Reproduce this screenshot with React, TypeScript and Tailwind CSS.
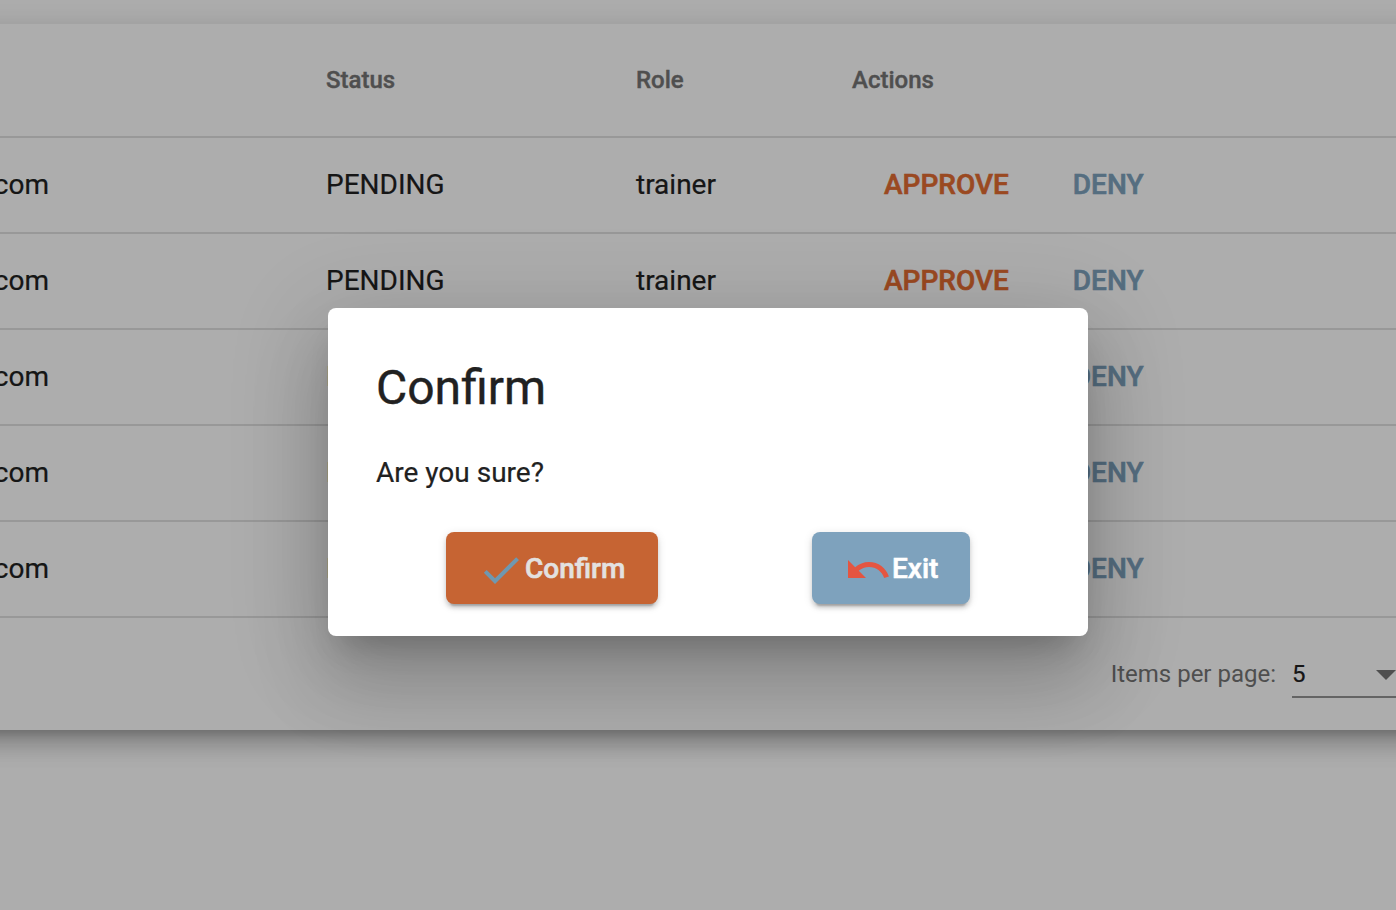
import React from "react";

const rows = [1, 2, 3, 4, 5];

function CheckIcon() {
  return (
    <svg viewBox="0 0 24 24" className="mt-1 size-12 shrink-0 fill-[#6f98b0]">
      <path d="M9 16.17L4.83 12l-1.42 1.41L9 19 21 7l-1.41-1.41z" />
    </svg>
  );
}

function UndoIcon() {
  return (
    <svg viewBox="0 0 24 24" className="mt-1 size-12 shrink-0 fill-[#e45541]">
      <path d="M12.5 8c-2.65 0-5.05.99-6.9 2.6L2 7v9h9l-3.62-3.62c1.39-1.16 3.16-1.88 5.12-1.88 3.54 0 6.55 2.31 7.6 5.5l2.37-.78C21.08 11.03 17.15 8 12.5 8z" />
    </svg>
  );
}

function UsersTable() {
  return (
    <div className="-mx-16 h-[706px] bg-white px-16 shadow-[0_10px_10px_-6px_rgba(0,0,0,0.2),0_16px_20px_2px_rgba(0,0,0,0.14),0_6px_28px_4px_rgba(0,0,0,0.12)]">
      <div className="flex h-[114px] items-center border-b-2 border-black/12 text-[24px] font-medium text-[#757575] [-webkit-text-stroke:0.4px]">
        <div className="w-[326px] shrink-0" />
        <div className="w-[310px] shrink-0">Status</div>
        <div className="w-[216px] shrink-0">Role</div>
        <div>Actions</div>
      </div>
      {rows.map((id) => (
        <div
          key={id}
          className="flex h-24 items-center border-b-2 border-black/12 text-[28px] text-[#212121] [-webkit-text-stroke:0.2px]"
        >
          <div className="w-[326px] shrink-0">
            <div className="flex w-[49px] justify-end">com</div>
          </div>
          <div className="w-[310px] shrink-0">PENDING</div>
          <div className="w-[216px] shrink-0">trainer</div>
          <div className="flex gap-16 pl-8 font-medium [-webkit-text-stroke:0.6px]">
            <span className="text-[#e46c32]">APPROVE</span>
            <span className="text-[#7ea2bd]">DENY</span>
          </div>
        </div>
      ))}
      <div className="flex h-28 items-center justify-end gap-4 text-[24px] text-[#757575]">
        <span>Items per page:</span>
        <div className="-mr-2 flex h-[46px] w-[112px] shrink-0 translate-y-px items-center justify-between border-b-2 border-black/42 pr-2">
          <span className="text-[#212121] [-webkit-text-stroke:0.2px]">5</span>
          <svg viewBox="0 0 20 10" className="mt-[2px] h-[10px] w-5 fill-black/54">
            <path d="M0 0h20L10 10z" />
          </svg>
        </div>
      </div>
    </div>
  );
}

function ConfirmDialog() {
  return (
    <div className="absolute inset-0 bg-black/32 pt-[308px] pl-[328px]">
      <div
        role="dialog"
        className="flex h-[328px] w-[760px] flex-col rounded-lg bg-white p-12 text-[#212121] shadow-[0_22px_30px_-14px_rgba(0,0,0,0.2),0_48px_76px_6px_rgba(0,0,0,0.14),0_18px_92px_16px_rgba(0,0,0,0.12)]"
      >
        <h1 className="text-[48px] leading-[64px] [-webkit-text-stroke:0.4px]">Confirm</h1>
        <p className="mt-[33px] text-[28px] leading-10 [-webkit-text-stroke:0.2px]">Are you sure?</p>
        <div className="mt-[39px] flex justify-between px-[70px] text-[28px] font-medium">
          <button className="flex h-[72px] w-[212px] items-center rounded-lg bg-[#c66433] pl-[31px] text-[#e3e1e0] shadow-[0_6px_2px_-4px_rgba(0,0,0,0.2),0_4px_4px_0_rgba(0,0,0,0.14),0_2px_10px_0_rgba(0,0,0,0.12)]">
            <CheckIcon />
            <span className="pt-0.5 [-webkit-text-stroke:0.6px]">Confirm</span>
          </button>
          <button className="flex h-[72px] w-[158px] items-center rounded-lg bg-[#7ea2bd] pl-8 text-white shadow-[0_6px_2px_-4px_rgba(0,0,0,0.2),0_4px_4px_0_rgba(0,0,0,0.14),0_2px_10px_0_rgba(0,0,0,0.12)]">
            <UndoIcon />
            <span className="pt-0.5 [-webkit-text-stroke:0.6px]">Exit</span>
          </button>
        </div>
      </div>
    </div>
  );
}

export default function App() {
  return (
    <div className="relative h-[910px] w-[1396px] overflow-hidden bg-white pt-6 font-['Roboto',sans-serif] antialiased">
      <UsersTable />
      <ConfirmDialog />
    </div>
  );
}
